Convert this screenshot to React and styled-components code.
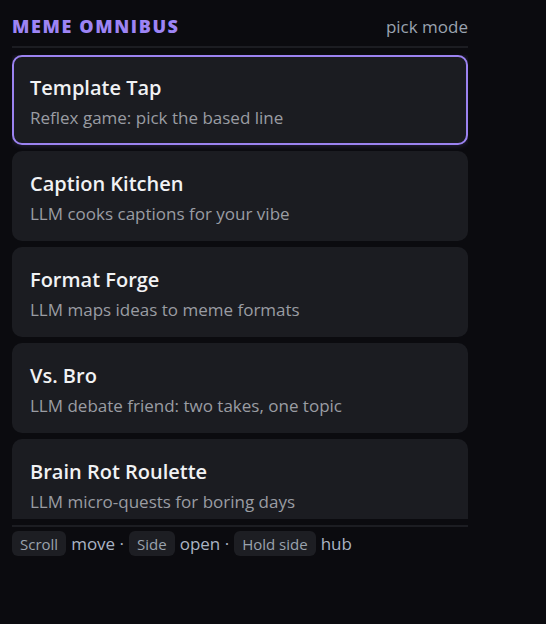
import React from "react";
import styled, { createGlobalStyle } from "styled-components";

const Global = createGlobalStyle`
  html, body { margin: 0; padding: 0; background: #0b0b0f; }
  body { font-family: "Open Sans", "Noto Sans", sans-serif; }
`;

const Panel = styled.div`
  width: 456px;
  padding: 12px 12px 0;
  display: flex;
  flex-direction: column;
`;

const Header = styled.header`
  display: flex;
  justify-content: space-between;
  align-items: center;
  height: 28px;
  padding-bottom: 6px;
  border-bottom: 2px solid #1c1d22;
`;

const Brand = styled.h1`
  margin: 0;
  font-size: 18px;
  font-weight: 800;
  letter-spacing: 1.6px;
  color: #9d84f5;
`;

const Mode = styled.span`
  font-size: 17px;
  color: #9aa3b0;
`;

const List = styled.div`
  margin-top: 7px;
  height: 464px;
  overflow: hidden;
  display: flex;
  flex-direction: column;
  gap: 6px;
`;

const Card = styled.div`
  flex: none;
  height: 90px;
  box-sizing: border-box;
  padding: 18px 16px 14px;
  border-radius: 10px;
  background: #1b1c21;
  border: 2px solid ${(p) => (p.$active ? "#9b82f0" : "transparent")};
  box-shadow: ${(p) => (p.$active ? "0 0 6px rgba(155,130,240,0.25)" : "none")};
`;

const Title = styled.div`
  font-size: 20px;
  line-height: 26px;
  font-weight: 600;
  color: #f1f2f4;
`;

const Sub = styled.div`
  margin-top: 6px;
  font-size: 17px;
  line-height: 22px;
  color: #9a9ca3;
`;

const Footer = styled.footer`
  margin-top: 6px;
  border-top: 2px solid #1c1d22;
  padding-top: 4px;
  display: flex;
  align-items: center;
  gap: 5px;
  font-size: 17px;
  color: #aab4c4;
`;

const Key = styled.span`
  display: inline-flex;
  align-items: center;
  height: 25px;
  padding: 0 8px;
  border-radius: 6px;
  background: #1d1e23;
  font-size: 15px;
  color: #9aa3ae;
`;

const items = [
  ["Template Tap", "Reflex game: pick the based line"],
  ["Caption Kitchen", "LLM cooks captions for your vibe"],
  ["Format Forge", "LLM maps ideas to meme formats"],
  ["Vs. Bro", "LLM debate friend: two takes, one topic"],
  ["Brain Rot Roulette", "LLM micro-quests for boring days"],
];

export default function App() {
  return (
    <>
      <Global />
      <Panel>
        <Header>
          <Brand>MEME OMNIBUS</Brand>
          <Mode>pick mode</Mode>
        </Header>
        <List>
          {items.map(([t, s], i) => (
            <Card key={t} $active={i === 0}>
              <Title>{t}</Title>
              <Sub>{s}</Sub>
            </Card>
          ))}
        </List>
        <Footer>
          <Key>Scroll</Key>
          <span>move ·</span>
          <Key>Side</Key>
          <span>open ·</span>
          <Key>Hold side</Key>
          <span>hub</span>
        </Footer>
      </Panel>
    </>
  );
}
